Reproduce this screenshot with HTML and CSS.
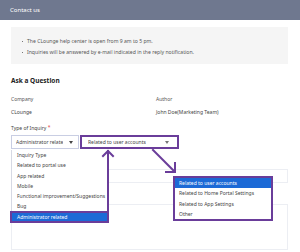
FILE: index.html
```html
<!DOCTYPE html>
<html lang="en">
<head>
<meta charset="utf-8">
<title>Contact us</title>
<link rel="stylesheet" href="styles.css">
</head>
<body>
<div class="page">
  <header class="topbar">Contact us</header>
  <main class="content">
    <div class="notice">
      <ul class="notice-list">
        <li>The CLounge help center is open from 9 am to 5 pm.</li>
        <li>Inquiries will be answered by e-mail indicated in the reply notification.</li>
      </ul>
    </div>
    <h2 class="section-title">Ask a Question</h2>
    <div class="info-grid">
      <div class="info-label">Company</div>
      <div class="info-label">Author</div>
      <div class="info-value">CLounge</div>
      <div class="info-value">John Doe(Marketing Team)</div>
    </div>
    <div class="field-label">Type of Inquiry <span class="req">*</span></div>
    <div class="select-row">
      <div class="select-wrap">
        <div class="select select-primary"><span class="select-text">Administrator relate</span><span class="caret"></span></div>
        <ul class="dropdown dropdown-primary">
          <li>Inquiry Type</li>
          <li>Related to portal use</li>
          <li>App related</li>
          <li>Mobile</li>
          <li>Functional improvement/Suggestions</li>
          <li>Bug</li>
          <li class="active marked">Administrator related</li>
        </ul>
      </div>
      <div class="select select-secondary"><span class="select-text">Related to user accounts</span><span class="caret"></span></div>
    </div>
    <div class="input-box"></div>
    <div class="textarea-box"></div>
  </main>
  <ul class="dropdown dropdown-secondary">
    <li class="active">Related to user accounts</li>
    <li>Related to Home Portal Settings</li>
    <li>Related to App Settings</li>
    <li>Other</li>
  </ul>
  <svg class="annotations" width="300" height="252" viewBox="0 0 300 252">
    <g fill="none" stroke="#6a3d9a" stroke-width="2" stroke-linecap="square">
      <path d="M108 210 V151"/>
      <path d="M103 156 L108 151 L113 156"/>
      <path d="M153 150 L174 171"/>
      <path d="M166 172 H175 V163"/>
    </g>
  </svg>
</div>
</body>
</html>
```
FILE: styles.css
```css
* { box-sizing: border-box; }
html, body { margin: 0; padding: 0; background: #fff; }
body {
  font-family: "Noto Sans", "Open Sans", sans-serif;
  color: #444;
  font-size: 5px;
}
.page {
  position: relative;
  width: 300px;
  height: 252px;
  overflow: hidden;
}
.topbar {
  height: 20px;
  background: #6f788f;
  color: #fff;
  font-size: 6px;
  line-height: 20px;
  padding-left: 10px;
}
.content {
  padding: 0 12px 0 11px;
}
.notice {
  margin-top: 7px;
  height: 37px;
  background: #f5f5f5;
  padding: 9px 0 0 11px;
}
.notice-list {
  list-style: none;
  margin: 0;
  padding: 0;
  color: #555;
}
.notice-list li {
  line-height: 11px;
  display: flex;
  align-items: center;
  gap: 4px;
  font-size: 5.1px;
}
.notice-list li::before {
  content: "";
  width: 1px;
  height: 1px;
  background: #777;
  flex: none;
}
.section-title {
  margin: 12px 0 0;
  font-size: 6.5px;
  font-weight: 700;
  line-height: 10px;
  color: #222;
}
.info-grid {
  display: grid;
  grid-template-columns: 145px 1fr;
  row-gap: 3px;
  margin-top: 8px;
}
.info-label, .info-value {
  line-height: 10px;
  color: #555;
}
.info-value { color: #444; }
.field-label {
  margin-top: 6px;
  line-height: 10px;
  color: #444;
}
.req {
  color: #e03c3c;
  position: relative;
  top: -1px;
}
.select-row {
  display: flex;
  gap: 1px;
  margin-top: 2px;
}
.select-wrap {
  position: relative;
}
.select {
  height: 14px;
  display: flex;
  align-items: center;
  justify-content: space-between;
  background: #fff;
  color: #444;
}
.select-text {
  white-space: nowrap;
  overflow: hidden;
}
.select-primary {
  width: 68px;
  border: 1px solid #c9cee3;
  padding: 0 5px 0 4px;
}
.select-secondary {
  width: 99px;
  border: 2px solid #6a3d9a;
  padding: 0 8px 0 6px;
}
.caret {
  width: 0;
  height: 0;
  border-left: 2px solid transparent;
  border-right: 2px solid transparent;
  border-top: 3px solid #444;
  flex: none;
}
.select-secondary .caret {
  border-top-color: #777;
}
.dropdown {
  list-style: none;
  margin: 0;
  padding: 0;
  background: #fff;
}
.dropdown li {
  height: 10.3px;
  line-height: 10.3px;
  white-space: nowrap;
  overflow: hidden;
  color: #444;
}
.dropdown li.active {
  background: #1c6ad6;
  color: #fff;
}
.dropdown-primary {
  position: absolute;
  left: 0;
  top: 15px;
  width: 97px;
  border-left: 1px solid #d6d9e4;
  border-bottom: 1px solid #d6d9e4;
  z-index: 2;
}
.dropdown-primary li {
  padding-left: 5px;
}
.dropdown-primary li.marked {
  outline: 2px solid #6a3d9a;
  outline-offset: -1px;
  margin-left: -1px;
  padding-left: 6px;
  margin-bottom: -1px;
}
.dropdown-secondary {
  position: absolute;
  left: 173px;
  top: 176px;
  width: 100px;
  border: 2px solid #6a3d9a;
  z-index: 2;
}
.dropdown-secondary li {
  padding-left: 4px;
}
.input-box {
  margin-top: 20px;
  height: 14px;
  border: 1px solid #eceef3;
}
.textarea-box {
  margin-top: 21px;
  height: 46px;
  border: 1px solid #eceef3;
}
.annotations {
  position: absolute;
  left: 0;
  top: 0;
  z-index: 3;
  pointer-events: none;
}
```
